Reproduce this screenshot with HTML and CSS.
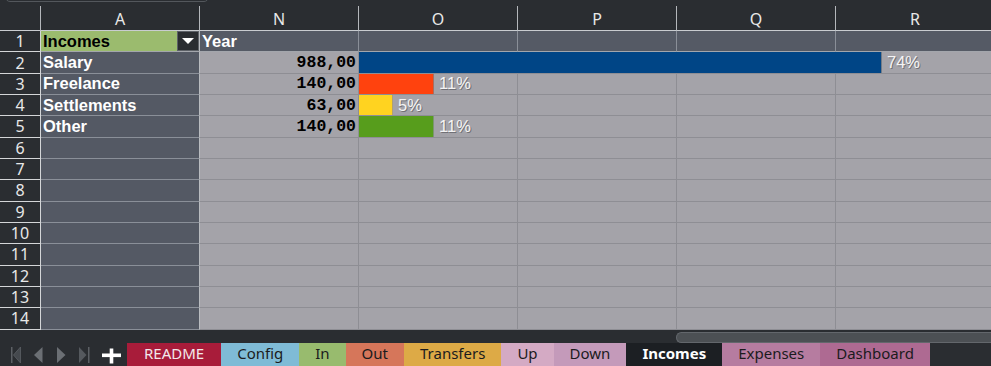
FILE: index.html
```html
<!DOCTYPE html>
<html>
<head>
<meta charset="utf-8">
<link rel="stylesheet" href="styles.css">
</head>
<body>
<div class="app">
  <div class="topstrip"><div class="namebox"></div></div>

  <div class="row colhead">
    <div class="rh corner"></div>
    <div class="ch">A</div>
    <div class="ch">N</div>
    <div class="ch">O</div>
    <div class="ch">P</div>
    <div class="ch">Q</div>
    <div class="ch">R</div>
  </div>

  <div class="row">
    <div class="rh">1</div>
    <div class="c a green"><span class="txt">Incomes</span><span class="dd"><span class="tri"></span></span></div>
    <div class="c hdr txtcell">Year</div>
    <div class="c hdr"></div>
    <div class="c hdr"></div>
    <div class="c hdr"></div>
    <div class="c hdr"></div>
  </div>

  <div class="row">
    <div class="rh">2</div>
    <div class="c a txtcell">Salary</div>
    <div class="c num">988,00</div>
    <div class="c o"><div class="barwrap"><div class="bar blue" style="width:523px"></div><span class="pct">74%</span></div></div>
    <div class="c"></div>
    <div class="c"></div>
    <div class="c"></div>
  </div>

  <div class="row">
    <div class="rh">3</div>
    <div class="c a txtcell">Freelance</div>
    <div class="c num">140,00</div>
    <div class="c o"><div class="barwrap"><div class="bar orange" style="width:75px"></div><span class="pct">11%</span></div></div>
    <div class="c"></div>
    <div class="c"></div>
    <div class="c"></div>
  </div>

  <div class="row">
    <div class="rh">4</div>
    <div class="c a txtcell">Settlements</div>
    <div class="c num">63,00</div>
    <div class="c o"><div class="barwrap"><div class="bar yellow" style="width:34px"></div><span class="pct">5%</span></div></div>
    <div class="c"></div>
    <div class="c"></div>
    <div class="c"></div>
  </div>

  <div class="row">
    <div class="rh">5</div>
    <div class="c a txtcell">Other</div>
    <div class="c num">140,00</div>
    <div class="c o"><div class="barwrap"><div class="bar green2" style="width:75px"></div><span class="pct">11%</span></div></div>
    <div class="c"></div>
    <div class="c"></div>
    <div class="c"></div>
  </div>

  <div class="row"><div class="rh">6</div><div class="c a"></div><div class="c"></div><div class="c"></div><div class="c"></div><div class="c"></div><div class="c"></div></div>
  <div class="row"><div class="rh">7</div><div class="c a"></div><div class="c"></div><div class="c"></div><div class="c"></div><div class="c"></div><div class="c"></div></div>
  <div class="row"><div class="rh">8</div><div class="c a"></div><div class="c"></div><div class="c"></div><div class="c"></div><div class="c"></div><div class="c"></div></div>
  <div class="row"><div class="rh">9</div><div class="c a"></div><div class="c"></div><div class="c"></div><div class="c"></div><div class="c"></div><div class="c"></div></div>
  <div class="row"><div class="rh">10</div><div class="c a"></div><div class="c"></div><div class="c"></div><div class="c"></div><div class="c"></div><div class="c"></div></div>
  <div class="row"><div class="rh">11</div><div class="c a"></div><div class="c"></div><div class="c"></div><div class="c"></div><div class="c"></div><div class="c"></div></div>
  <div class="row"><div class="rh">12</div><div class="c a"></div><div class="c"></div><div class="c"></div><div class="c"></div><div class="c"></div><div class="c"></div></div>
  <div class="row"><div class="rh">13</div><div class="c a"></div><div class="c"></div><div class="c"></div><div class="c"></div><div class="c"></div><div class="c"></div></div>
  <div class="row"><div class="rh">14</div><div class="c a"></div><div class="c"></div><div class="c"></div><div class="c"></div><div class="c"></div><div class="c"></div></div>

  <div class="bottom">
    <div class="scrollzone"><div class="scrollbar"></div></div>
    <div class="tabbar">
      <div class="nav">
        <svg width="127" height="23" viewBox="0 0 127 23">
          <rect x="11" y="4" width="1.5" height="16" fill="#5c6065"/>
          <polygon points="20.5,4 13.5,12 20.5,20" fill="#45494e" stroke="#5c6065" stroke-width="0.8"/>
          <polygon points="42.5,4 34,12 42.5,20" fill="#6b6f74"/>
          <polygon points="57,4 65.5,12 57,20" fill="#6b6f74"/>
          <polygon points="79,4 86.5,12 79,20" fill="#55595e"/>
          <rect x="88" y="4" width="1.5" height="16" fill="#5c6065"/>
          <rect x="102" y="10.5" width="19" height="3.6" fill="#ffffff"/>
          <rect x="109.7" y="5.5" width="3.6" height="15" fill="#ffffff"/>
        </svg>
      </div>
      <div class="tab readme">README</div>
      <div class="tab config">Config</div>
      <div class="tab in">In</div>
      <div class="tab out">Out</div>
      <div class="tab transfers">Transfers</div>
      <div class="tab up">Up</div>
      <div class="tab down">Down</div>
      <div class="tab active">Incomes</div>
      <div class="tab expenses">Expenses</div>
      <div class="tab dashboard">Dashboard</div>
    </div>
  </div>
</div>
</body>
</html>
```

FILE: styles.css
```css
html, body {
  margin: 0;
  padding: 0;
}
body {
  width: 991px;
  height: 366px;
  overflow: hidden;
  background: #2a2d31;
  font-family: "Liberation Sans", Arial, sans-serif;
}
.app {
  width: 991px;
  height: 366px;
  overflow: hidden;
  display: flex;
  flex-direction: column;
}
.topstrip {
  height: 6px;
  flex: none;
  padding-left: 5px;
}
.namebox {
  width: 202px;
  height: 8px;
  margin-top: -8px;
  border: 1px solid #53575c;
  border-radius: 5px;
}
.row {
  display: flex;
  flex: none;
  height: 21.33px;
}
.colhead {
  height: 25px;
}
.rh, .ch, .c {
  box-sizing: border-box;
  flex: none;
}
.rh {
  width: 41px;
  border-right: 1px solid #d4d6d8;
  border-bottom: 1px solid #d4d6d8;
  background: #2a2d31;
  color: #e8e8e8;
  font-family: "Noto Sans", sans-serif;
  font-size: 16px;
  display: flex;
  align-items: center;
  justify-content: center;
}
.corner {
  border-right-color: #b4b7bb;
  border-bottom-color: #c9ccd0;
}
.ch {
  width: 159px;
  border-right: 1px solid #b4b7bb;
  border-bottom: 1px solid #c9ccd0;
  color: #e8e8e8;
  font-family: "Noto Sans", sans-serif;
  font-size: 16px;
  display: flex;
  align-items: center;
  justify-content: center;
  padding-top: 1px;
}
.c {
  width: 159px;
  background: #a4a3a9;
  border-right: 1px solid #8e8e94;
  border-bottom: 1px solid #8e8e94;
  display: flex;
  align-items: center;
  font-size: 16.5px;
  white-space: nowrap;
}
.a {
  background: #545964;
  border-right-color: #b9bcc0;
  border-bottom-color: #8a8f98;
  color: #ffffff;
  font-weight: bold;
}
.txtcell {
  padding-left: 2px;
  font-weight: bold;
}
.hdr {
  background: #555a65;
  border-right-color: #8a8f98;
  border-bottom-color: #a3a6ac;
  color: #ffffff;
}
.green {
  background: #9bbb6e;
  color: #000000;
  border-bottom-color: #a3a6ac;
}
.green .txt {
  flex: 1;
  padding-left: 2px;
}
.dd {
  box-sizing: border-box;
  width: 22px;
  height: 100%;
  background: #2a2d31;
  border: 1px solid #5d6167;
  display: flex;
  align-items: center;
  justify-content: center;
}
.tri {
  width: 0;
  height: 0;
  border-left: 6px solid transparent;
  border-right: 6px solid transparent;
  border-top: 6px solid #ffffff;
}
.num {
  justify-content: flex-end;
  padding-right: 2px;
  font-family: "Liberation Mono", "Courier New", monospace;
  font-weight: bold;
  color: #000000;
}
.o {
  position: relative;
}
.barwrap {
  position: absolute;
  left: 0;
  top: 0;
  bottom: 0;
  display: flex;
  align-items: center;
  z-index: 2;
}
.bar {
  box-sizing: border-box;
  height: 100%;
  flex: none;
  border-right: 1px solid #737b86;
}
.blue { background: #004586; }
.orange { background: #ff420e; border-right-color: #a86e60; }
.yellow { background: #ffd320; border-right-color: #b0a070; }
.green2 { background: #579d1c; border-right-color: #7c9670; }
.pct {
  margin-left: 5px;
  color: #f4f4f4;
  font-size: 16.5px;
  text-shadow: 1px 1px 0 #707076;
}
.bottom {
  flex: 1;
  display: flex;
  flex-direction: column;
  background: #2a2d31;
}
.scrollzone {
  height: 13px;
  flex: none;
  display: flex;
  justify-content: flex-end;
}
.scrollbar {
  box-sizing: border-box;
  width: 315px;
  height: 11px;
  margin-top: 2px;
  background: #4c5054;
  border: 1px solid #63676c;
  border-right: none;
  border-radius: 6px 0 0 6px;
}
.tabbar {
  flex: 1;
  display: flex;
  align-items: stretch;
}
.nav {
  width: 127px;
  flex: none;
  display: flex;
}
.tab {
  flex: none;
  padding: 0 16px;
  font-family: "Noto Sans", sans-serif;
  font-size: 15px;
  line-height: 21px;
  color: #1b1b1d;
  white-space: nowrap;
}
.readme { background: #a81c3a; color: #f2e8ea; padding: 0 17px; }
.config { background: #7fbbd6; }
.in { background: #98bb6e; }
.out { background: #d6765a; }
.transfers { background: #ddaa46; }
.up { background: #d4aac4; }
.down { background: #c49aba; }
.active { background: #1c1f23; color: #ffffff; font-weight: bold; }
.expenses { background: #b67ca0; }
.dashboard { background: #ae6a92; }
```
